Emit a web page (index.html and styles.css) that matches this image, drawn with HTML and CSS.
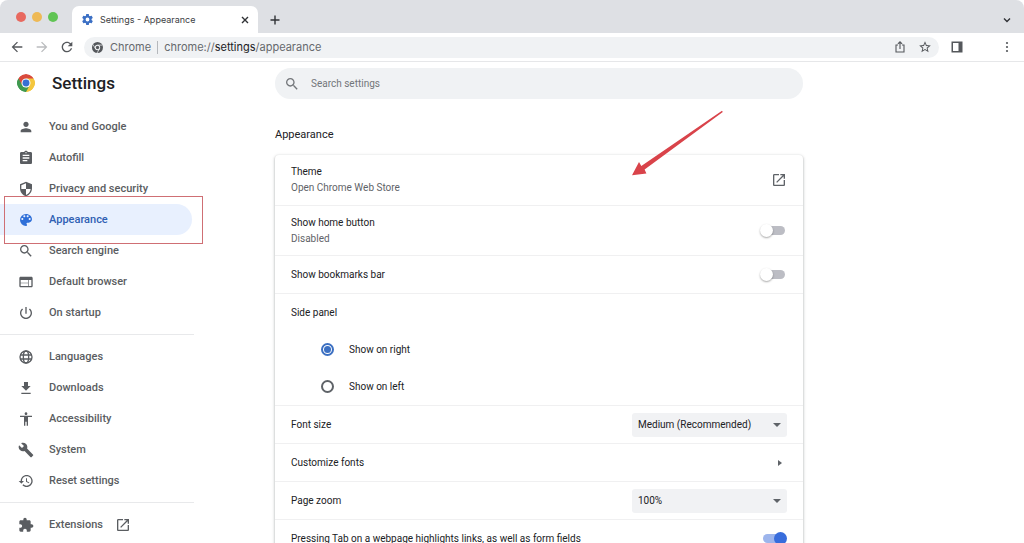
FILE: index.html
```html
<!DOCTYPE html>
<html lang="en">
<head>
<meta charset="utf-8">
<title>Settings - Appearance</title>
<link rel="stylesheet" href="styles.css">
</head>
<body>
<div class="browser">
  <div class="tab-strip">
    <div class="lights"><span class="light red"></span><span class="light yellow"></span><span class="light green"></span></div>
    <div class="tab">
      <svg class="tab-icon" viewBox="0 0 24 24"><path d="M19.43 12.98c.04-.32.07-.64.07-.98s-.03-.66-.07-.98l2.11-1.65c.19-.15.24-.42.12-.64l-2-3.46c-.12-.22-.39-.3-.61-.22l-2.49 1c-.52-.4-1.08-.73-1.69-.98l-.38-2.65C14.46 2.18 14.25 2 14 2h-4c-.25 0-.46.18-.49.42l-.38 2.65c-.61.25-1.17.59-1.69.98l-2.49-1c-.23-.09-.49 0-.61.22l-2 3.46c-.13.22-.07.49.12.64l2.11 1.65c-.04.32-.07.65-.07.98s.03.66.07.98l-2.11 1.65c-.19.15-.24.42-.12.64l2 3.46c.12.22.39.3.61.22l2.49-1c.52.4 1.08.73 1.69.98l.38 2.65c.03.24.24.42.49.42h4c.25 0 .46-.18.49-.42l.38-2.65c.61-.25 1.17-.59 1.69-.98l2.49 1c.23.09.49 0 .61-.22l2-3.46c.12-.22.07-.49-.12-.64l-2.11-1.65zM12 15.500a3.500 3.500 0 1 1 0-7 3.500 3.500 0 0 1 0 7z"/></svg>
      <span class="tab-title">Settings - Appearance</span>
      <button class="icon-button tab-close" aria-label="Close tab"><svg class="glyph-8" viewBox="0 0 8 8"><path class="line" d="M1 1l6 6M7 1L1 7"/></svg></button>
    </div>
    <button class="icon-button new-tab" aria-label="New tab"><svg class="glyph-10" viewBox="0 0 10 10"><path class="line" d="M5 0.500v9M0.500 5h9"/></svg></button>
    <button class="icon-button tab-menu" aria-label="Search tabs"><svg class="glyph-8" viewBox="0 0 8 8"><path class="line" d="M1 2.500l3 3 3-3"/></svg></button>
  </div>

  <div class="toolbar">
    <button class="icon-button" aria-label="Back"><svg class="icon" viewBox="0 0 24 24"><path d="M20 11H7.830l5.590-5.590L12 4l-8 8 8 8 1.410-1.410L7.830 13H20v-2z"/></svg></button>
    <button class="icon-button disabled" aria-label="Forward" disabled><svg class="icon" viewBox="0 0 24 24"><path d="M4 13h12.170l-5.590 5.590L12 20l8-8-8-8-1.410 1.410L16.170 11H4v2z"/></svg></button>
    <button class="icon-button" aria-label="Reload"><svg class="icon" viewBox="0 0 24 24"><path d="M17.650 6.350C16.200 4.900 14.210 4 12 4c-4.420 0-7.990 3.580-7.990 8s3.570 8 7.990 8c3.730 0 6.840-2.550 7.730-6h-2.080c-.82 2.330-3.040 4-5.650 4-3.310 0-6-2.690-6-6s2.690-6 6-6c1.660 0 3.140.69 4.220 1.780L13 11h7V4l-2.350 2.350z"/></svg></button>
    <div class="address">
      <svg class="site-icon" viewBox="0 0 24 24"><circle cx="12" cy="12" r="12"/><circle class="cut" cx="12" cy="12" r="5.800"/><circle cx="12" cy="12" r="3.600"/><path class="cut-line" d="M12 6.800h11M7.500 14.600L2 5.200M16.500 14.600L11 24"/></svg>
      <span class="site-name">Chrome</span>
      <span class="site-url">chrome://<b>settings</b>/appearance</span>
      <button class="icon-button share" aria-label="Share"><svg class="icon-14" viewBox="0 0 14 14"><path class="thin" d="M5 5H3v7h8V5H9M7 9V2M4.900 3.900L7 1.800l2.100 2.100"/></svg></button>
      <button class="icon-button" aria-label="Bookmark this tab"><svg class="icon-14" viewBox="0 0 24 24"><path d="M22 9.240l-7.190-.62L12 2 9.190 8.630 2 9.240l5.460 4.730L5.820 21 12 17.270 18.180 21l-1.630-7.030L22 9.240zM12 15.400l-3.760 2.270 1-4.280-3.320-2.880 4.380-.38L12 6.100l1.710 4.040 4.380.38-3.320 2.880 1 4.280L12 15.400z"/></svg></button>
    </div>
    <button class="icon-button panel-button" aria-label="Side panel"><svg class="icon-14" viewBox="0 0 14 14"><path d="M1.500 1.500h11v11h-11zM3 3v8h5.500V3z" fill-rule="evenodd"/></svg></button>
    <button class="icon-button" aria-label="Menu"><svg class="icon-14" viewBox="0 0 14 14"><circle cx="7" cy="3" r="1.100"/><circle cx="7" cy="7" r="1.100"/><circle cx="7" cy="11" r="1.100"/></svg></button>
  </div>

  <div class="page">
    <aside class="sidebar">
      <header class="brand">
        <svg class="logo" viewBox="0 0 48 48"><path fill="#d94a3d" d="M24 24L3.200 12A24 24 0 0 1 44.800 12z"/><path fill="#f4c63d" d="M24 24l20.800-12A24 24 0 0 1 24 48z"/><path fill="#3f9950" d="M24 24v24A24 24 0 0 1 3.200 12z"/><path fill="#d94a3d" d="M3.200 12L14.500 31 24 24l20.800-12H24z"/><path fill="#f4c63d" d="M24 12h20.800A24 24 0 0 1 24 48l10.400-18z"/><path fill="#3f9950" d="M3.200 12l10.400 18L24 36l8-3-8 15A24 24 0 0 1 3.200 12z"/><circle cx="24" cy="24" r="12" fill="#fff"/><circle cx="24" cy="24" r="9.300" fill="#376fd4"/></svg>
        <h1 class="brand-title">Settings</h1>
      </header>
      <nav class="menu">
        <a class="item" href="#people"><svg class="icon" viewBox="0 0 24 24"><path d="M12 12c2.210 0 4-1.790 4-4s-1.790-4-4-4-4 1.790-4 4 1.790 4 4 4zm0 2c-2.670 0-8 1.340-8 4v2h16v-2c0-2.660-5.330-4-8-4z"/></svg>You and Google</a>
        <a class="item" href="#autofill"><svg class="icon" viewBox="0 0 24 24"><path d="M19 3h-4.180C14.400 1.840 13.300 1 12 1s-2.400.84-2.820 2H5c-1.100 0-2 .9-2 2v14c0 1.100.9 2 2 2h14c1.100 0 2-.9 2-2V5c0-1.100-.9-2-2-2zm-7 0c.55 0 1 .45 1 1s-.45 1-1 1-1-.45-1-1 .45-1 1-1zm2 14H7v-2h7v2zm3-4H7v-2h10v2zm0-4H7V7h10v2z"/></svg>Autofill</a>
        <a class="item" href="#privacy"><svg class="icon" viewBox="0 0 24 24"><path d="M12 1L3 5v6c0 5.550 3.840 10.740 9 12 5.160-1.260 9-6.450 9-12V5l-9-4zm0 10.990h7c-.53 4.120-3.280 7.790-7 8.940V12H5V6.300l7-3.110v8.800z"/></svg>Privacy and security</a>
        <div class="current-wrap">
          <a class="item current" href="#appearance" aria-current="page"><svg class="icon" viewBox="0 0 24 24"><path d="M12 3a9 9 0 0 0 0 18c.83 0 1.500-.67 1.500-1.500 0-.39-.15-.74-.39-1.010-.23-.26-.38-.61-.38-.99 0-.83.67-1.500 1.500-1.500H16c2.760 0 5-2.240 5-5 0-4.420-4.030-8-9-8zm-5.500 9c-.83 0-1.500-.67-1.500-1.500S5.670 9 6.500 9 8 9.670 8 10.500 7.330 12 6.500 12zm3-4C8.670 8 8 7.330 8 6.500S8.670 5 9.500 5s1.500.67 1.500 1.500S10.330 8 9.500 8zm5 0c-.83 0-1.500-.67-1.500-1.500S13.670 5 14.500 5s1.500.67 1.500 1.500S15.330 8 14.500 8zm3 4c-.83 0-1.500-.67-1.500-1.500S16.670 9 17.500 9s1.500.67 1.500 1.500-.67 1.500-1.500 1.500z"/></svg>Appearance</a>
          <span class="marker"></span>
        </div>
        <a class="item" href="#search"><svg class="icon" viewBox="0 0 24 24"><path d="M15.500 14h-.79l-.28-.27C15.410 12.590 16 11.110 16 9.500 16 5.910 13.090 3 9.500 3S3 5.910 3 9.500 5.910 16 9.500 16c1.610 0 3.090-.59 4.230-1.570l.27.28v.79l5 4.990L20.490 19l-4.990-5zm-6 0C7.010 14 5 11.990 5 9.500S7.010 5 9.500 5 14 7.010 14 9.500 11.990 14 9.500 14z"/></svg>Search engine</a>
        <a class="item" href="#browser"><svg class="icon" viewBox="0 0 24 24"><path d="M20 4H4c-1.100 0-1.990.9-1.990 2L2 18c0 1.100.9 2 2 2h16c1.100 0 2-.9 2-2V6c0-1.100-.9-2-2-2zm-5 14H4v-4h11v4zm0-5H4V9h11v4zm5 5h-4V9h4v9z"/></svg>Default browser</a>
        <a class="item" href="#startup"><svg class="icon" viewBox="0 0 24 24"><path d="M13 3h-2v10h2V3zm4.830 2.170l-1.420 1.420C17.990 7.860 19 9.810 19 12c0 3.870-3.130 7-7 7s-7-3.130-7-7c0-2.190 1.010-4.140 2.580-5.420L6.170 5.170C4.230 6.820 3 9.260 3 12c0 4.970 4.030 9 9 9s9-4.030 9-9c0-2.740-1.230-5.180-3.170-6.830z"/></svg>On startup</a>
        <hr class="rule">
        <a class="item" href="#languages"><svg class="icon" viewBox="0 0 24 24"><g class="globe"><circle cx="12" cy="12" r="9"/><ellipse cx="12" cy="12" rx="4" ry="9"/><path d="M3.600 9h16.800M3.600 15h16.800"/></g></svg>Languages</a>
        <a class="item" href="#downloads"><svg class="icon" viewBox="0 0 24 24"><path d="M19 9h-4V3H9v6H5l7 7 7-7zM5 19v2h14v-2H5z"/></svg>Downloads</a>
        <a class="item" href="#accessibility"><svg class="icon" viewBox="0 0 24 24"><path d="M12 2c1.100 0 2 .9 2 2s-.9 2-2 2-2-.9-2-2 .9-2 2-2zm9 7h-6v13h-2v-6h-2v6H9V9H3V7h18v2z"/></svg>Accessibility</a>
        <a class="item" href="#system"><svg class="icon" viewBox="0 0 24 24"><path d="M22.700 19l-9.100-9.100c.9-2.300.4-5-1.500-6.900-2-2-5-2.400-7.400-1.300L9 6 6 9 1.600 4.700C.4 7.100.9 10.100 2.900 12.100c1.900 1.900 4.600 2.400 6.900 1.500l9.100 9.100c.4.4 1 .4 1.400 0l2.300-2.300c.5-.4.5-1.100.1-1.400z"/></svg>System</a>
        <a class="item" href="#reset"><svg class="icon" viewBox="0 0 24 24"><path d="M13 3c-4.970 0-9 4.030-9 9H1l3.890 3.890.07.14L9 12H6c0-3.870 3.130-7 7-7s7 3.130 7 7-3.130 7-7 7c-1.930 0-3.680-.79-4.940-2.060l-1.420 1.420C8.270 19.990 10.510 21 13 21c4.970 0 9-4.030 9-9s-4.030-9-9-9zm-1 5v5l4.280 2.540.72-1.210-3.500-2.080V8H12z"/></svg>Reset settings</a>
        <hr class="rule">
        <a class="item external" href="#extensions"><svg class="icon" viewBox="0 0 24 24"><path d="M20.500 11H19V7c0-1.100-.9-2-2-2h-4V3.500C13 2.120 11.880 1 10.500 1S8 2.120 8 3.500V5H4c-1.100 0-1.990.9-1.990 2v3.800H3.500c1.490 0 2.700 1.210 2.700 2.700s-1.210 2.700-2.700 2.700H2V20c0 1.100.9 2 2 2h3.800v-1.500c0-1.490 1.210-2.700 2.700-2.700s2.700 1.210 2.700 2.700V22H17c1.100 0 2-.9 2-2v-4h1.500c1.380 0 2.500-1.120 2.500-2.500S21.880 11 20.500 11z"/></svg><span class="external-label">Extensions</span><svg class="icon" viewBox="0 0 24 24"><path d="M19 19H5V5h7V3H5c-1.110 0-2 .9-2 2v14c0 1.100.89 2 2 2h14c1.100 0 2-.9 2-2v-7h-2v7zM14 3v2h3.590l-9.830 9.830 1.410 1.410L19 6.410V10h2V3h-7z"/></svg></a>
      </nav>
    </aside>

    <main class="main">
      <label class="search">
        <svg class="icon" viewBox="0 0 24 24"><path d="M15.500 14h-.79l-.28-.27C15.410 12.590 16 11.110 16 9.500 16 5.910 13.090 3 9.500 3S3 5.910 3 9.500 5.910 16 9.500 16c1.610 0 3.090-.59 4.230-1.570l.27.28v.79l5 4.990L20.490 19l-4.990-5zm-6 0C7.010 14 5 11.990 5 9.500S7.010 5 9.500 5 14 7.010 14 9.500 11.990 14 9.500 14z"/></svg>
        <input class="search-input" type="text" placeholder="Search settings" aria-label="Search settings">
      </label>
      <h2 class="section-title">Appearance</h2>
      <section class="card">
        <a class="row tall" href="#theme">
          <span class="label">Theme<span class="sub">Open Chrome Web Store</span></span>
          <svg class="icon" viewBox="0 0 24 24"><path d="M19 19H5V5h7V3H5c-1.110 0-2 .9-2 2v14c0 1.100.89 2 2 2h14c1.100 0 2-.9 2-2v-7h-2v7zM14 3v2h3.590l-9.830 9.830 1.410 1.410L19 6.410V10h2V3h-7z"/></svg>
        </a>
        <label class="row tall"><span class="label">Show home button<span class="sub">Disabled</span></span><input class="toggle" type="checkbox"></label>
        <label class="row"><span class="label">Show bookmarks bar</span><input class="toggle" type="checkbox"></label>
        <fieldset class="group">
          <legend class="legend">Side panel</legend>
          <label class="choice"><input class="radio" type="radio" name="side" checked>Show on right</label>
          <label class="choice"><input class="radio" type="radio" name="side">Show on left</label>
        </fieldset>
        <div class="row"><label class="label" for="font-size">Font size</label><span class="select-wrap"><select class="select" id="font-size"><option>Medium (Recommended)</option></select></span></div>
        <a class="row" href="#fonts"><span class="label">Customize fonts</span><span class="chevron"></span></a>
        <div class="row"><label class="label" for="zoom">Page zoom</label><span class="select-wrap"><select class="select" id="zoom"><option>100%</option></select></span></div>
        <label class="row"><span class="label">Pressing Tab on a webpage highlights links, as well as form fields</span><input class="toggle" type="checkbox" checked></label>
        <svg class="arrow" viewBox="0 0 92 66"><path d="M91 .7l.8 1.200L13.600 59.500l1.800 4L1 65.200 8 52l2.300 4z"/></svg>
      </section>
    </main>
  </div>
</div>
</body>
</html>
```
FILE: styles.css
```css
* { box-sizing: border-box; }

body {
  margin: 0;
  background: #fff;
  color: #202124;
  font-family: Roboto, "Liberation Sans", sans-serif;
  font-size: 11px;
  line-height: 16px;
}

a { color: inherit; text-decoration: none; }

svg { display: block; flex: none; fill: currentColor; }

.browser {
  display: flex;
  flex-direction: column;
  height: 100vh;
  overflow: hidden;
}

.icon { width: 16px; height: 16px; }
.icon-14 { width: 14px; height: 14px; }
.glyph-8 { width: 8px; height: 8px; }
.glyph-10 { width: 10px; height: 10px; }

.line, .thin { fill: none; stroke: currentColor; stroke-width: 1.4; }
.thin { stroke-width: 1.1; }

.icon-button {
  display: flex;
  padding: 0;
  border: 0;
  background: none;
  color: #55585c;
}

.disabled { color: #babcbe; }

/* Tab strip */
.tab-strip {
  display: flex;
  flex: none;
  align-items: center;
  height: 33px;
  padding: 6px 13px 0 16px;
  background: #dee0e4;
  border-radius: 8px 8px 0 0;
}

.lights { display: flex; gap: 6px; margin: 0 14px 6px 0; }
.light { width: 10px; height: 10px; border-radius: 50%; }
.red { background: #e8695f; }
.yellow { background: #eeb955; }
.green { background: #60c454; }

.tab {
  display: flex;
  align-items: center;
  width: 186px;
  height: 27px;
  padding: 0 9px;
  background: #fff;
  border-radius: 7px 7px 0 0;
  font-family: Inter, "Liberation Sans", sans-serif;
  font-size: 9px;
  color: #3c4043;
}

.tab-icon { width: 13px; height: 13px; margin-right: 6px; color: #3b6fc4; }
.tab-title { flex: 1; }
.tab-close, .new-tab, .tab-menu { color: #303236; }
.new-tab { margin-left: 12px; }
.tab-menu { margin-left: auto; }

/* Toolbar */
.toolbar {
  display: flex;
  flex: none;
  align-items: center;
  gap: 9px;
  height: 29px;
  padding: 0 10px 0 9px;
  border-bottom: 1px solid #e6e7e9;
}

.address {
  display: flex;
  flex: 1;
  align-items: center;
  gap: 11px;
  height: 21px;
  margin-right: 2px;
  padding: 0 7px 0 8px;
  border-radius: 11px;
  background: #f0f2f4;
  color: #66696d;
  font-family: Inter, "Liberation Sans", sans-serif;
}

.site-icon { width: 11px; height: 11px; margin-right: -4px; color: #55585c; }
.cut { fill: #f0f2f4; }
.cut-line { fill: none; stroke: #f0f2f4; stroke-width: 1.6; }
.site-name { margin-right: -5px; padding-right: 6px; border-right: 1px solid #b5b8bc; line-height: 13px; }
.site-url b { font-weight: 400; color: #202124; }
.share { margin-left: auto; }
.panel-button { margin-right: 27px; }

/* Page */
.page { display: flex; flex: 1; min-height: 0; }

.sidebar { flex: none; width: 206px; color: #5a5d61; }

.brand {
  display: flex;
  align-items: center;
  gap: 17px;
  height: 42px;
  padding-left: 17px;
}

.logo { width: 18px; height: 18px; border-radius: 50%; }

.brand-title {
  margin: 0;
  color: #202124;
  font-size: 17px;
  font-weight: 500;
  line-height: 24px;
}

.menu { padding-top: 7px; }

.item {
  display: flex;
  align-items: center;
  gap: 15px;
  height: 31px;
  margin-right: 14px;
  padding-left: 18px;
  border-radius: 0 16px 16px 0;
  font-weight: 500;
}

.current { background: #e8f0fe; color: #2f5fb3; }
.current .icon { color: #2f6fd8; }
.current-wrap { position: relative; }
.external-label { margin-right: -3px; }

.marker {
  position: absolute;
  inset: -8px 3px -9px 4px;
  border: 1px solid #cf6f74;
}

.rule {
  margin: 6px 12px 6px 0;
  border: 0;
  border-top: 1px solid #e8e9eb;
}

.globe { fill: none; stroke: currentColor; stroke-width: 2; }

/* Main column */
.main { flex: 0 1 597px; padding: 6px 0 0 69px; font-size: 10px; }

.search {
  display: flex;
  align-items: center;
  gap: 11px;
  height: 31px;
  padding: 0 9px;
  border-radius: 16px;
  background: #f0f2f4;
  color: #73767a;
}

.search-input {
  flex: 1;
  min-width: 0;
  padding: 0;
  border: 0;
  outline: 0;
  background: none;
  color: #202124;
  font: inherit;
}

.search-input::placeholder { color: #73767a; opacity: 1; }

.section-title {
  margin: 28px 0 12px;
  font-size: 11px;
  font-weight: 400;
  line-height: 16px;
}

.card {
  position: relative;
  border-radius: 4px;
  background: #fff;
  box-shadow: 0 1px 2px rgba(60, 64, 67, 0.3), 0 1px 3px 1px rgba(60, 64, 67, 0.15);
}

.row {
  display: flex;
  align-items: center;
  justify-content: space-between;
  min-height: 38px;
  padding: 0 16px;
  border-top: 1px solid #f0f0f1;
}

.row:first-child { border-top: 0; }
.row .icon { color: #5f6368; }
.tall { min-height: 50px; }
.sub { display: block; color: #5f6368; }

.group {
  min-width: 0;
  margin: 0;
  padding: 0 16px;
  border: 0;
  border-top: 1px solid #f0f0f1;
}

.legend { float: left; width: 100%; padding: 11px 0 10px; }

.choice {
  display: flex;
  clear: both;
  align-items: center;
  gap: 15px;
  height: 37px;
  padding-left: 30px;
}

.radio {
  appearance: none;
  display: grid;
  place-items: center;
  width: 13px;
  height: 13px;
  margin: 0;
  border: 2px solid #5f6368;
  border-radius: 50%;
}

.radio:checked { border-color: #3c70c2; }
.radio:checked::before {
  content: "";
  width: 7px;
  height: 7px;
  border-radius: 50%;
  background: #3c70c2;
}

.toggle {
  appearance: none;
  display: flex;
  align-items: center;
  width: 22px;
  height: 9px;
  margin: 0 2px;
  border-radius: 5px;
  background: #bcbdc4;
}

.toggle::before {
  content: "";
  flex: none;
  width: 13px;
  height: 13px;
  margin-left: -3px;
  border-radius: 50%;
  background: #fff;
  box-shadow: 0 1px 2px rgba(0, 0, 0, 0.35);
}

.toggle:checked { background: #9db5ec; }
.toggle:checked::before { margin-left: 11px; background: #386ddc; box-shadow: none; }

.select-wrap { position: relative; width: 155px; }

.select-wrap::after {
  content: "";
  position: absolute;
  top: 10px;
  right: 6px;
  border: 4px solid transparent;
  border-top-color: #5f6368;
  border-bottom: 0;
  pointer-events: none;
}

.select {
  display: block;
  appearance: none;
  width: 100%;
  height: 24px;
  padding: 0 6px;
  border: 0;
  border-radius: 3px;
  background: #f1f2f4;
  color: #202124;
  font: inherit;
}

.chevron {
  margin-right: 5px;
  border: 3px solid transparent;
  border-left: 4px solid #5f6368;
  border-right: 0;
}

.arrow {
  position: absolute;
  top: -45px;
  left: 356px;
  width: 92px;
  height: 66px;
  color: #d9434a;
}
```
